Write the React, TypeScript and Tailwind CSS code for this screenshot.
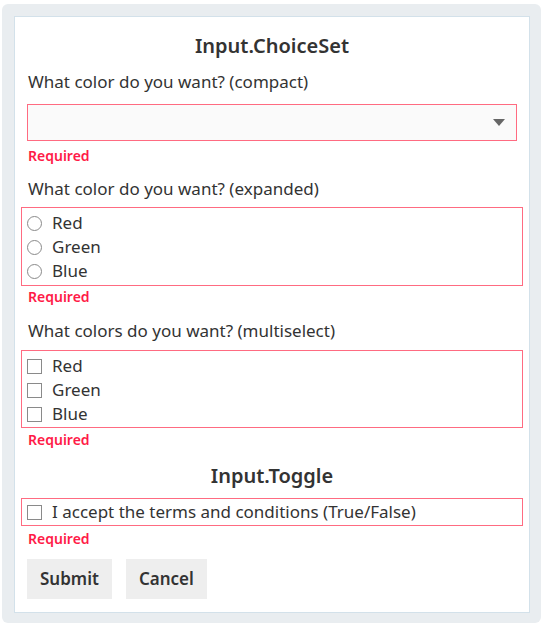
import React from "react";

const font = { fontFamily: '"Noto Sans", "Open Sans", sans-serif' };

function Required({ gap = "mt-[7px]" }: { gap?: string }) {
  return <div className={`${gap} text-[14px] font-semibold text-[#ff1a47] leading-[18px] ml-[1px]`}>Required</div>;
}

function Label({ children }: { children: React.ReactNode }) {
  return <div className="text-[17px] text-[#333] leading-[20px] ml-[1px]">{children}</div>;
}

function Option({ label, type }: { label: string; type: "radio" | "checkbox" }) {
  return (
    <div className="flex items-center h-[24px]">
      <span
        className={
          type === "radio"
            ? "w-[15px] h-[15px] rounded-full border border-[#8a8a8a] bg-white"
            : "w-[15px] h-[15px] border border-[#8a8a8a] bg-white"
        }
      />
      <span className="ml-[10px] text-[17px] text-[#333] leading-[20px]">{label}</span>
    </div>
  );
}

export default function App() {
  return (
    <div className="pt-[4px] pl-[2px]" style={font}>
      <div className="w-[539px] h-[619px] rounded-md bg-[#e9edf0] p-[12px]">
        <div className="h-[597px] w-[516px] border border-[#d3e1ea] bg-white px-[12px] pt-[17px]">
          <h2 className="text-center text-[20px] font-semibold text-[#333] leading-[24px]">Input.ChoiceSet</h2>

          <div className="mt-[14px]">
            <Label>What color do you want? (compact)</Label>
          </div>
          <div className="mt-[12px] h-[37px] border border-[#ff6b81] bg-[#fafafa] flex items-center justify-end pr-[11px]">
            <svg width="12" height="7" viewBox="0 0 12 7">
              <path d="M0 0 L12 0 L6 7 Z" fill="#666" />
            </svg>
          </div>
          <Required gap="mt-[6px]" />

          <div className="mt-[14px]">
            <Label>What color do you want? (expanded)</Label>
          </div>
          <div className="mt-[8px] -mx-[6px] border border-[#ff6b81] px-[5px] pt-[3px] pb-[2px]">
            <Option type="radio" label="Red" />
            <Option type="radio" label="Green" />
            <Option type="radio" label="Blue" />
          </div>
          <Required gap="mt-[2px]" />

          <div className="mt-[15px]">
            <Label>What colors do you want? (multiselect)</Label>
          </div>
          <div className="mt-[9px] -mx-[6px] border border-[#ff6b81] px-[5px] pt-[3px] pb-[1px]">
            <Option type="checkbox" label="Red" />
            <Option type="checkbox" label="Green" />
            <Option type="checkbox" label="Blue" />
          </div>
          <Required gap="mt-[3px]" />

          <h2 className="mt-[15px] text-center text-[20px] font-semibold text-[#333] leading-[24px]">Input.Toggle</h2>
          <div className="mt-[10px] -mx-[6px] border border-[#ff6b81] px-[5px] py-[1px]">
            <Option type="checkbox" label="I accept the terms and conditions (True/False)" />
          </div>
          <Required gap="mt-[4px]" />

          <div className="mt-[11px] flex gap-[14px]">
            <button className="h-[40px] px-[13px] bg-[#eeeeee] text-[17px] font-semibold text-[#333]">Submit</button>
            <button className="h-[40px] px-[13px] bg-[#eeeeee] text-[17px] font-semibold text-[#333]">Cancel</button>
          </div>
        </div>
      </div>
    </div>
  );
}
